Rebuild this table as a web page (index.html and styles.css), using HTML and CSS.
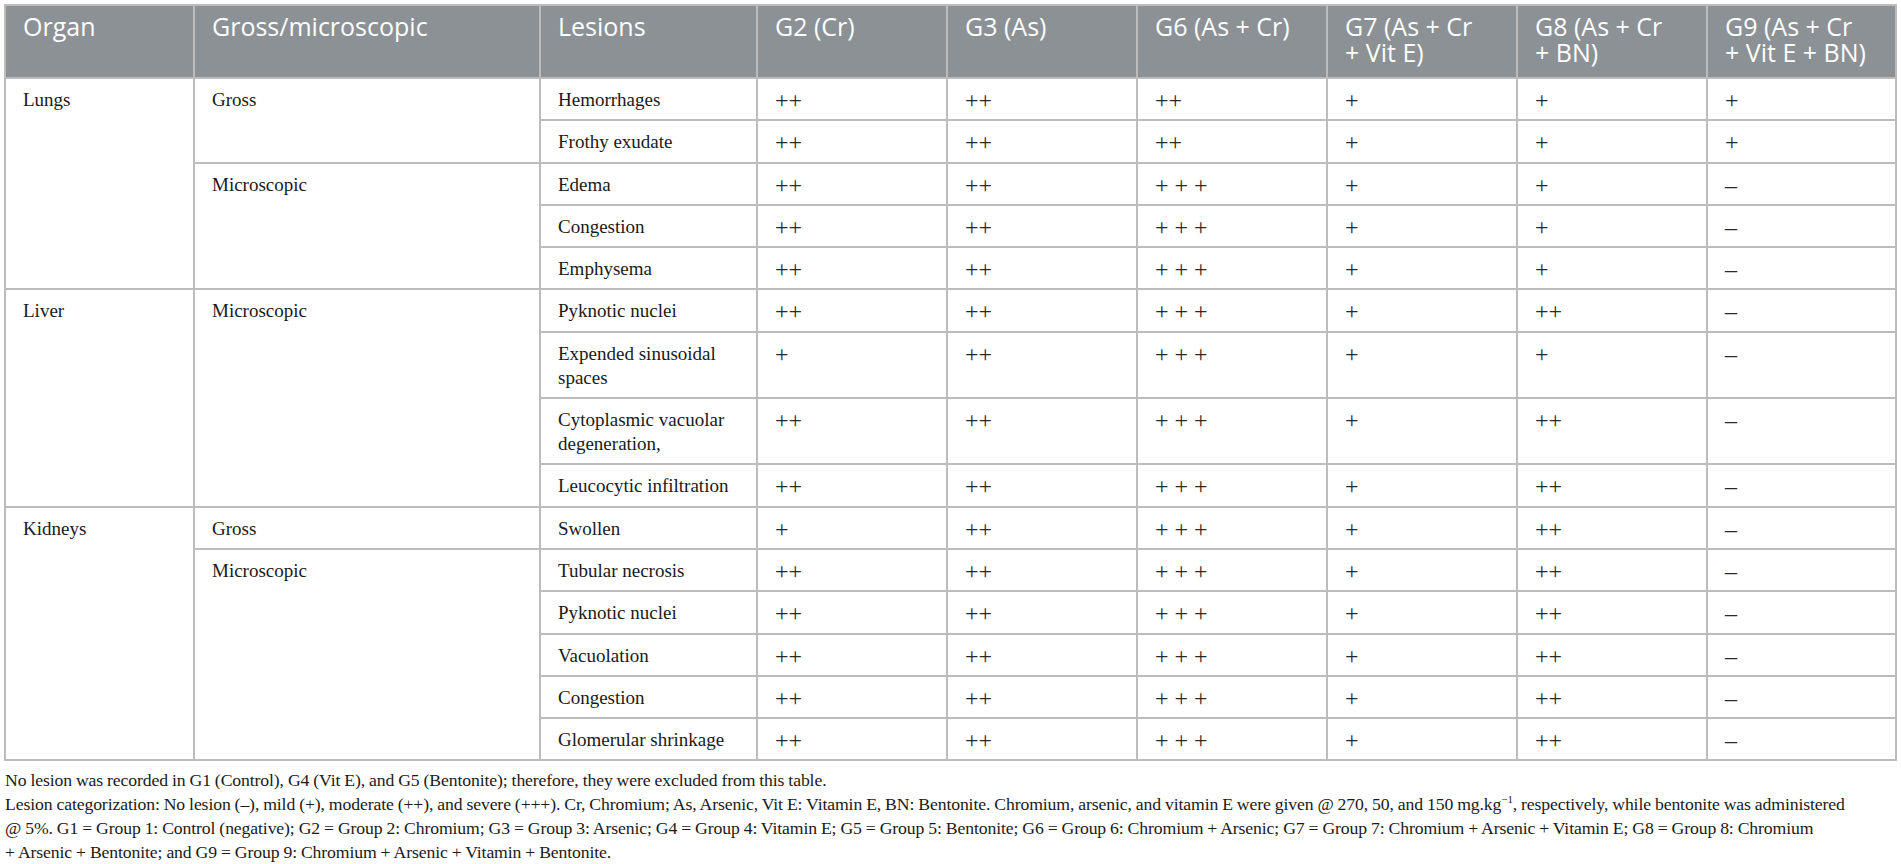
FILE: index.html
```html
<!DOCTYPE html>
<html lang="en">
<head>
<meta charset="utf-8">
<title>Lesions table</title>
<link rel="stylesheet" href="styles.css">
</head>
<body>
<div class="wrap">
<table class="lesions">
  <colgroup>
    <col class="c-organ">
    <col class="c-type">
    <col class="c-lesion">
    <col class="c-g"><col class="c-g"><col class="c-g"><col class="c-g"><col class="c-g"><col class="c-g9">
  </colgroup>
  <thead>
    <tr>
      <th>Organ</th>
      <th>Gross/microscopic</th>
      <th>Lesions</th>
      <th>G2 (Cr)</th>
      <th>G3 (As)</th>
      <th>G6 (As + Cr)</th>
      <th>G7 (As + Cr +&nbsp;Vit&nbsp;E)</th>
      <th>G8 (As + Cr +&nbsp;BN)</th>
      <th>G9 (As + Cr +&nbsp;Vit E + BN)</th>
    </tr>
  </thead>
  <tbody>
    <tr><td rowspan="5">Lungs</td><td rowspan="2">Gross</td><td>Hemorrhages</td><td class="v">++</td><td class="v">++</td><td class="v">++</td><td class="v">+</td><td class="v">+</td><td class="v">+</td></tr>
    <tr><td>Frothy exudate</td><td class="v">++</td><td class="v">++</td><td class="v">++</td><td class="v">+</td><td class="v">+</td><td class="v">+</td></tr>
    <tr><td rowspan="3">Microscopic</td><td>Edema</td><td class="v">++</td><td class="v">++</td><td class="v">+ + +</td><td class="v">+</td><td class="v">+</td><td class="v">–</td></tr>
    <tr><td>Congestion</td><td class="v">++</td><td class="v">++</td><td class="v">+ + +</td><td class="v">+</td><td class="v">+</td><td class="v">–</td></tr>
    <tr><td>Emphysema</td><td class="v">++</td><td class="v">++</td><td class="v">+ + +</td><td class="v">+</td><td class="v">+</td><td class="v">–</td></tr>
    <tr><td rowspan="4">Liver</td><td rowspan="4">Microscopic</td><td>Pyknotic nuclei</td><td class="v">++</td><td class="v">++</td><td class="v">+ + +</td><td class="v">+</td><td class="v">++</td><td class="v">–</td></tr>
    <tr><td>Expended sinusoidal spaces</td><td class="v">+</td><td class="v">++</td><td class="v">+ + +</td><td class="v">+</td><td class="v">+</td><td class="v">–</td></tr>
    <tr><td>Cytoplasmic vacuolar degeneration,</td><td class="v">++</td><td class="v">++</td><td class="v">+ + +</td><td class="v">+</td><td class="v">++</td><td class="v">–</td></tr>
    <tr><td>Leucocytic infiltration</td><td class="v">++</td><td class="v">++</td><td class="v">+ + +</td><td class="v">+</td><td class="v">++</td><td class="v">–</td></tr>
    <tr><td rowspan="6">Kidneys</td><td>Gross</td><td>Swollen</td><td class="v">+</td><td class="v">++</td><td class="v">+ + +</td><td class="v">+</td><td class="v">++</td><td class="v">–</td></tr>
    <tr><td rowspan="5">Microscopic</td><td>Tubular necrosis</td><td class="v">++</td><td class="v">++</td><td class="v">+ + +</td><td class="v">+</td><td class="v">++</td><td class="v">–</td></tr>
    <tr><td>Pyknotic nuclei</td><td class="v">++</td><td class="v">++</td><td class="v">+ + +</td><td class="v">+</td><td class="v">++</td><td class="v">–</td></tr>
    <tr><td>Vacuolation</td><td class="v">++</td><td class="v">++</td><td class="v">+ + +</td><td class="v">+</td><td class="v">++</td><td class="v">–</td></tr>
    <tr><td>Congestion</td><td class="v">++</td><td class="v">++</td><td class="v">+ + +</td><td class="v">+</td><td class="v">++</td><td class="v">–</td></tr>
    <tr><td>Glomerular shrinkage</td><td class="v">++</td><td class="v">++</td><td class="v">+ + +</td><td class="v">+</td><td class="v">++</td><td class="v">–</td></tr>
  </tbody>
</table>
<div class="notes">
  <p>No lesion was recorded in G1 (Control), G4 (Vit E), and G5 (Bentonite); therefore, they were excluded from this table.</p>
  <p>Lesion categorization: No lesion (–), mild (+), moderate (++), and severe (+++). Cr, Chromium; As, Arsenic, Vit E: Vitamin E, BN: Bentonite. Chromium, arsenic, and vitamin E were given @ 270, 50, and 150 mg.kg<sup>−1</sup>, respectively, while bentonite was administered<br>@ 5%. G1 = Group 1: Control (negative); G2 = Group 2: Chromium; G3 = Group 3: Arsenic; G4 = Group 4: Vitamin E; G5 = Group 5: Bentonite; G6 = Group 6: Chromium + Arsenic; G7 = Group 7: Chromium + Arsenic + Vitamin E; G8 = Group 8: Chromium<br>+ Arsenic + Bentonite; and G9 = Group 9: Chromium + Arsenic + Vitamin + Bentonite.</p>
</div>
</div>
</body>
</html>
```

FILE: styles.css
```css
html, body {
  margin: 0;
  padding: 0;
  background: #ffffff;
}

.wrap {
  padding: 4px 3px 0 4px;
}

.lesions {
  width: 1893px;
  border-collapse: collapse;
  table-layout: fixed;
  border: 2px solid #bcbcbc;
  font-family: "Liberation Serif", "Times New Roman", serif;
  font-size: 19px;
  color: #1a1a1a;
}

.c-organ { width: 189px; }
.c-type { width: 346px; }
.c-lesion { width: 217px; }
.c-g { width: 190px; }
.c-g9 { width: 189px; }

.lesions th {
  background: #8b9195;
  color: #ffffff;
  font-family: "Open Sans", "Liberation Sans", sans-serif;
  font-weight: 400;
  font-size: 25px;
  line-height: 26px;
  text-align: left;
  vertical-align: top;
  padding: 7px 17px 12px 17px;
  height: 52px;
  border: 2px solid #bcbcbc;
}

.lesions td {
  border: 2px solid #bcbcbc;
  padding: 9px 17px 7.3px 17px;
  line-height: 24px;
  vertical-align: top;
  text-align: left;
}

.lesions td.v {
  color: #2a2a2a;
  font-size: 24px;
}

.notes {
  font-family: "Liberation Serif", "Times New Roman", serif;
  font-size: 17.7px;
  line-height: 24px;
  letter-spacing: -0.12px;
  word-spacing: -0.3px;
  color: #1a1a1a;
  padding: 7px 0 0 1px;
}

.notes p {
  margin: 0;
}

.notes sup {
  font-size: 11px;
  line-height: 0;
  vertical-align: 7px;
}
```
